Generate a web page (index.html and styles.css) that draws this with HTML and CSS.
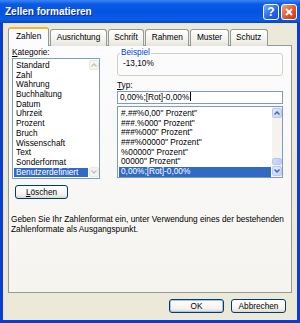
FILE: index.html
```html
<!DOCTYPE html>
<html lang="de">
<head>
    <meta charset="UTF-8">
    <title>Zellen formatieren</title>
    <link rel="stylesheet" href="styles.css">
</head>
<body>
<div class="window">
    <div class="titlebar">
        <span class="title">Zellen formatieren</span>
        <span class="caption-btn help">?</span>
        <span class="caption-btn close">
            <svg width="10" height="10" viewBox="0 0 10 10"><path d="M2 2 L8 8 M8 2 L2 8" stroke="#fff" stroke-width="2" fill="none"/></svg>
        </span>
    </div>
    <div class="client">
        <div class="tabs">
            <div class="tab active">Zahlen</div>
            <div class="tab">Ausrichtung</div>
            <div class="tab">Schrift</div>
            <div class="tab">Rahmen</div>
            <div class="tab">Muster</div>
            <div class="tab">Schutz</div>
        </div>
        <div class="panel">
            <div class="cols">
                <div class="col">
                    <div class="label"><u>K</u>ategorie:</div>
                    <div class="listbox cat">
                        <ul class="items">
                            <li>Standard</li>
                            <li>Zahl</li>
                            <li>Währung</li>
                            <li>Buchhaltung</li>
                            <li>Datum</li>
                            <li>Uhrzeit</li>
                            <li>Prozent</li>
                            <li>Bruch</li>
                            <li>Wissenschaft</li>
                            <li>Text</li>
                            <li>Sonderformat</li>
                            <li class="sel">Benutzerdefiniert</li>
                        </ul>
                        <!-- Bildlaufleiste, deaktiviert -->
                        <div class="vscroll off">
                            <span class="arrow"><svg width="8" height="8" viewBox="0 0 8 8"><path d="M1.5 5.5 L4 3 L6.5 5.5" stroke="#c4c2b5" stroke-width="1.4" fill="none"/></svg></span>
                            <span class="track"></span>
                            <span class="arrow"><svg width="8" height="8" viewBox="0 0 8 8"><path d="M1.5 2.5 L4 5 L6.5 2.5" stroke="#c4c2b5" stroke-width="1.4" fill="none"/></svg></span>
                        </div>
                    </div>
                    <button class="btn del"><u>L</u>öschen</button>
                </div>
                <div class="col">
                    <fieldset class="sample">
                        <legend>Beispiel</legend>
                        <div>-13,10%</div>
                    </fieldset>
                    <div class="label typ"><u>T</u>yp:</div>
                    <div class="textbox">0,00%;[Rot]-0,00%<span class="caret"></span></div>
                    <div class="listbox fmt">
                        <ul class="items">
                            <li>#.##%0,00" Prozent"</li>
                            <li>###.%000" Prozent"</li>
                            <li>###%000" Prozent"</li>
                            <li>###%00000" Prozent"</li>
                            <li>%00000" Prozent"</li>
                            <li>00000" Prozent"</li>
                            <li class="sel">0,00%;[Rot]-0,00%</li>
                        </ul>
                        <div class="vscroll">
                            <span class="arrow"><svg width="8" height="8" viewBox="0 0 8 8"><path d="M1.5 5.5 L4 3 L6.5 5.5" stroke="#4d6185" stroke-width="1.4" fill="none"/></svg></span>
                            <span class="track"></span>
                            <span class="thumb"></span>
                            <span class="arrow"><svg width="8" height="8" viewBox="0 0 8 8"><path d="M1.5 2.5 L4 5 L6.5 2.5" stroke="#4d6185" stroke-width="1.4" fill="none"/></svg></span>
                        </div>
                    </div>
                </div>
            </div>
            <p class="hint">Geben Sie Ihr Zahlenformat ein, unter Verwendung eines der bestehenden<br>Zahlenformate als Ausgangspunkt.</p>
        </div>
        <div class="actions">
            <button class="btn default">OK</button>
            <button class="btn">Abbrechen</button>
        </div>
    </div>
</div>
</body>
</html>
```

FILE: styles.css
```css
* {
    box-sizing: border-box;
}
body {
    margin: 0;
    font-family: "Liberation Sans", Arial, sans-serif;
    font-size: 8.25px;
    color: #000;
}
.window {
    width: 300px;
    height: 323px;
    background: #0a3ed0;
    display: flex;
    flex-direction: column;
}
.titlebar {
    height: 23px;
    display: flex;
    align-items: center;
    padding: 0 3px 0 5px;
    background: linear-gradient(#3a86f5, #0a5ae6 18%, #0453de 50%, #0a5ce6 85%, #0843c8);
    color: #fff;
}
.title {
    flex: 1;
    font-weight: bold;
    font-size: 10px;
    text-shadow: 1px 1px #0b2a99;
}
.caption-btn {
    width: 16px;
    height: 16px;
    margin-left: 2px;
    border: 1px solid #fff;
    border-radius: 3px;
    display: flex;
    align-items: center;
    justify-content: center;
}
.help {
    background: linear-gradient(135deg, #74aaff, #2563e6 60%, #1a4fd0);
    font-weight: bold;
    font-size: 12px;
    line-height: 14px;
}
.close {
    background: linear-gradient(135deg, #f4a183, #e2572c 55%, #c53a12);
}
.client {
    flex: 1;
    margin: 0 3px 3px;
    background: #ece9d8;
    padding: 4px 5px 0;
    display: flex;
    flex-direction: column;
}
.tabs {
    display: flex;
    align-items: flex-end;
    height: 19px;
    margin-bottom: -1px;
    position: relative;
    z-index: 1;
}
.tab {
    height: 17px;
    padding: 0 5.5px;
    margin-right: 1px;
    border: 1px solid #919b9c;
    border-bottom: none;
    border-radius: 3px 3px 0 0;
    background: linear-gradient(#fff, #f3f2ee 60%, #e6e4da);
    line-height: 15px;
    white-space: nowrap;
}
.tab.active {
    height: 19px;
    padding: 0 7px;
    border-top: 2px solid #f5b33a;
    background: #fcfcfe;
    line-height: 16px;
}
.panel {
    height: 248px;
    border: 1px solid #919b9c;
    background: linear-gradient(#fcfcfe, #f5f4ef);
    padding: 2px 8px 0 3px;
}
.cols {
    display: grid;
    grid-template-columns: 88px 166px;
    column-gap: 17px;
}
.col {
    display: flex;
    flex-direction: column;
    align-items: flex-start;
}
.label {
    height: 10px;
    line-height: 10px;
}
.label.typ {
    margin-top: 5px;
}
.listbox {
    width: 100%;
    display: flex;
    border: 1px solid #7f9db9;
    background: #fff;
}
.listbox.cat {
    height: 121px;
}
.listbox.fmt {
    height: 72px;
    margin-top: 2px;
}
.items {
    flex: 1;
    list-style: none;
    margin: 0;
    padding: 2px 1px 0;
    overflow: hidden;
}
.items li {
    line-height: 9.7px;
    height: 9.7px;
    padding-left: 2px;
    white-space: nowrap;
}
.items li.sel {
    background: #316ac5;
    color: #fff;
}
.vscroll {
    width: 10px;
    padding: 1px 0;
    display: flex;
    flex-direction: column;
    background: #f4f3ee;
}
.vscroll .arrow {
    height: 10px;
    border: 1px solid #b7c8f2;
    border-radius: 2px;
    background: linear-gradient(135deg, #e3ebff, #c1d2fb);
    display: flex;
    align-items: center;
    justify-content: center;
}
.vscroll .track {
    flex: 1;
}
.vscroll .thumb {
    height: 7px;
    margin-bottom: 1px;
    border: 1px solid #b7c8f2;
    border-radius: 2px;
    background: linear-gradient(90deg, #cfdcfd, #bccdfa);
}
.vscroll.off {
    background: #fff;
}
.vscroll.off .arrow {
    border-color: #e9e8e1;
    background: #f5f4ef;
}
.btn {
    font: inherit;
    height: 14px;
    padding: 0;
    border: 1px solid #003c74;
    border-radius: 3px;
    background: linear-gradient(#fff, #f4f3ee 70%, #dcd8cc);
    color: #000;
}
.btn.del {
    width: 53px;
    margin: 6px 0 0 3px;
}
.btn.default {
    box-shadow: inset 0 0 0 1px #a9c4f0;
}
.actions .btn {
    width: 55px;
}
.sample {
    width: 100%;
    margin: 0;
    padding: 1px 5px 6px;
    border: 1px solid #d0d0bf;
    border-radius: 3px;
    line-height: 10px;
}
.sample legend {
    margin-left: -3px;
    padding: 0 1px;
    color: #0046d5;
    line-height: 10px;
}
.textbox {
    width: 100%;
    height: 13px;
    padding: 0 2px;
    border: 1px solid #7f9db9;
    background: #fff;
    line-height: 11px;
    white-space: nowrap;
}
.caret {
    display: inline-block;
    width: 1px;
    height: 9px;
    margin-left: 1px;
    background: #000;
    vertical-align: -1px;
}
.hint {
    margin: 16px 0 0 -1px;
    line-height: 10px;
    white-space: nowrap;
}
.actions {
    display: flex;
    justify-content: flex-end;
    gap: 7px;
    margin-top: 6px;
    padding-right: 6px;
}
```
